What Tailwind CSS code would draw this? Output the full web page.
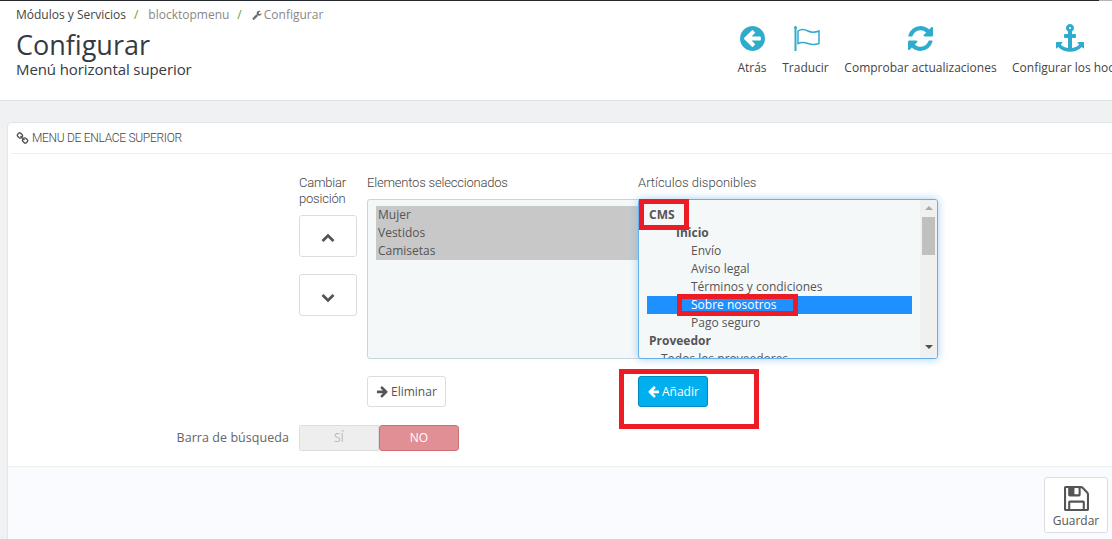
<!DOCTYPE html>
<html lang="es">
<head>
<meta charset="utf-8">
<title>Configurar</title>
<script src="https://cdn.jsdelivr.net/npm/@tailwindcss/browser@4"></script>
</head>
<body class="m-0">
<div class="relative w-[1112px] h-[539px] overflow-hidden bg-[#eff1f2] font-['Open_Sans',sans-serif] text-[#555]">

  <!-- top line -->
  <div class="flex h-px"><div class="w-[1099px] bg-[#25282d]"></div><div class="flex-1 bg-[#b5b5b5]"></div></div>

  <!-- header -->
  <header class="flex h-[100px] bg-white border-b border-[#dfe1e2]">
    <div class="w-[737px] shrink-0 pl-4">
      <nav class="flex items-center h-[14px] mt-[7px] text-[12px] leading-[14px] text-[#888] whitespace-nowrap">
        <span class="text-[#444]">Módulos y Servicios</span>
        <span class="ml-2 text-[#6a9c24]">/</span>
        <span class="ml-2.5">blocktopmenu</span>
        <span class="ml-2 text-[#6a9c24]">/</span>
        <svg class="ml-2.5 w-[10px] h-[10px] fill-[#666]" viewBox="0 0 1792 1792"><path d="M448 1472q0-26-19-45t-45-19-45 19-19 45 19 45 45 19 45-19 19-45zm644-420l-682 682q-37 37-90 37-52 0-91-37l-106-108q-38-36-38-90 0-53 38-91l681-681q39 98 114.500 173.500t173.500 114.500zm634-435q0 39-23 106-47 134-164.500 217.500t-258.500 83.500q-185 0-316.500-131.500t-131.500-316.500 131.500-316.500 316.500-131.500q58 0 121.500 16.500t107.500 46.500q16 11 16 28t-16 28l-293 169v224l193 107q5-3 79-48.500t135.500-81 70.500-35.500q15 0 23.500 10t8.500 25z"/></svg>
        <span class="ml-[2px]">Configurar</span>
      </nav>
      <h1 class="mt-[7px] text-[27px] leading-[32px] font-normal text-[#363a41]">Configurar</h1>
      <p class="text-[15px] leading-[16px] tracking-[-0.1px] text-[#363a41]">Menú horizontal superior</p>
    </div>
    <div class="flex gap-[15px] pt-[25px] text-[12px] leading-[14px] text-[#444] whitespace-nowrap">
      <div class="flex flex-col items-center w-[30px]">
        <svg class="w-[25px] h-[25px] fill-[#2eacce]" viewBox="128 128 1536 1536"><path d="M1408 960v-128q0-26-19-45t-45-19h-502l189-189q19-19 19-45t-19-45l-91-91q-18-18-45-18t-45 18l-362 362-91 91q-18 18-18 45t18 45l91 91 362 362q18 18 45 18t45-18l91-91q18-18 18-45t-18-45l-189-189h502q26 0 45-19t19-45zm256-64q0 209-103 385.500t-279.500 279.500-385.500 103-385.500-103-279.500-279.500-103-385.500 103-385.500 279.500-279.500 385.500-103 385.500 103 279.500 279.500 103 385.500z"/></svg>
        <span class="mt-[10px]">Atrás</span>
      </div>
      <div class="flex flex-col items-center w-[47px]">
        <svg class="w-[28px] h-[25px] fill-none stroke-[#2eacce]" viewBox="0 0 28 25"><path d="M3.500 1v24" stroke-width="2"/><circle cx="3.500" cy="1.500" r="1.500" fill="#2eacce" stroke="none"/><path d="M6 5c3-2 6-2 10 0s7 1.500 11 0v12.500c-4 1.500-7 1.500-11 0s-7-1.500-10 0z" stroke-width="1.500"/></svg>
        <span class="mt-[10px]">Traducir</span>
      </div>
      <div class="flex flex-col items-center w-[153px]">
        <svg class="w-[25px] h-[25px] fill-[#2eacce]" viewBox="128 128 1536 1536"><path d="M1639 1056q0 5-1 7-64 268-268 434.500t-478 166.500q-146 0-282.500-55t-243.500-157l-129 129q-19 19-45 19t-45-19-19-45v-448q0-26 19-45t45-19h448q26 0 45 19t19 45-19 45l-137 137q71 66 161 102t187 36q134 0 250-65t186-179q11-17 53-117 8-23 30-23h192q13 0 22.500 9.500t9.500 22.500zm25-800v448q0 26-19 45t-45 19h-448q-26 0-45-19t-19-45 19-45l138-138q-148-137-349-137-134 0-250 65t-186 179q-11 17-53 117-8 23-30 23h-199q-13 0-22.500-9.500t-9.500-22.500v-7q65-268 270-434.500t480-166.500q146 0 284 55.500t245 156.500l130-129q19-19 45-19t45 19 19 45z"/></svg>
        <span class="mt-[10px]">Comprobar actualizaciones</span>
      </div>
      <div class="flex flex-col items-start w-[110px]">
        <svg class="ml-[44px] w-[28px] h-[28px] -mt-[2px] -mb-[2px] fill-[#2eacce]" viewBox="0 0 1792 1792"><path d="M960 256q0-26-19-45t-45-19-45 19-19 45 19 45 45 19 45-19 19-45zm832 928v352q0 22-20 30-8 2-12 2-12 0-23-9l-93-93q-119 143-318.500 226.500t-429.500 83.500-429.500-83.500-318.500-226.500l-93 93q-9 9-23 9-4 0-12-2-20-8-20-30v-352q0-14 9-23t23-9h352q22 0 30 20 8 19-7 35l-100 100q67 91 189.500 153.500t271.500 82.500v-647h-192q-26 0-45-19t-19-45v-128q0-26 19-45t45-19h192v-163q-58-34-93-92.500t-35-128.500q0-106 75-181t181-75 181 75 75 181q0 70-35 128.500t-93 92.500v163h192q26 0 45 19t19 45v128q0 26-19 45t-45 19h-192v647q149-20 271.500-82.500t189.500-153.500l-100-100q-15-16-7-35 8-20 30-20h352q14 0 23 9t9 23z"/></svg>
        <span class="mt-[11px]">Configurar los hooks</span>
      </div>
    </div>
  </header>

  <!-- panel -->
  <section class="ml-[7px] mt-[21px] w-[1110px] h-[420px] flex flex-col bg-white border border-[#e3e5e6] rounded-tl-[5px]">
    <div class="flex items-center gap-[3px] h-[31px] mx-[3px] px-[5px] border-b border-[#eeeeee] font-['Roboto',sans-serif] font-light text-[12px] text-[#444] tracking-[-0.3px]">
      <svg class="w-[13px] h-[13px] fill-[#555]" viewBox="0 0 1792 1792"><path d="M1520 1216q0-40-28-68l-208-208q-28-28-68-28-42 0-72 32 3 3 19 18.500t21.500 21.500 15 19 13 25.500 3.500 27.500q0 40-28 68t-68 28q-15 0-27.500-3.500t-25.500-13-19-15-21.500-21.500-18.500-19q-33 31-33 73 0 40 28 68l206 207q27 27 68 27 40 0 68-26l147-146q28-28 28-67zm-703-705q0-40-28-68l-206-207q-28-28-68-28-39 0-68 27l-147 146q-28 28-28 67 0 40 28 68l208 208q27 27 68 27 42 0 72-31-3-3-19-18.500t-21.500-21.500-15-19-13-25.500-3.500-27.500q0-40 28-68t68-28q15 0 27.500 3.500t25.500 13 19 15 21.500 21.500 18.500 19q33-31 33-73zm895 705q0 120-85 203l-147 146q-83 83-203 83-121 0-204-85l-206-207q-83-83-83-203 0-123 88-209l-88-88q-86 88-208 88-120 0-204-84l-208-208q-84-84-84-204t85-203l147-146q83-83 203-83 121 0 204 85l206 207q83 83 83 203 0 123-88 209l88 88q86-88 208-88 120 0 204 84l208 208q84 84 84 204z"/></svg>
      <span>MENU DE ENLACE SUPERIOR</span>
    </div>

    <div class="h-[312px] shrink-0 pl-[291px] pt-[21px]">
      <div class="flex">
        <!-- col 1 -->
        <div class="w-[68px] shrink-0">
          <div class="font-['Roboto',sans-serif] font-light text-[13px] leading-[16px] tracking-[-0.2px] text-[#444] h-[40px]">Cambiar<br>posición</div>
          <button class="flex items-center justify-center pt-[2px] w-[58px] h-[42px] bg-white border border-[#dddddd] rounded-[3px]">
            <svg class="w-[14px] h-[14px] fill-[#555]" viewBox="0 0 1792 1792"><path d="M1683 1331l-166 165q-19 19-45 19t-45-19l-531-531-531 531q-19 19-45 19t-45-19l-166-165q-19-19-19-45.500t19-45.500l742-741q19-19 45-19t45 19l742 741q19 19 19 45.500t-19 45.500z"/></svg>
          </button>
          <button class="flex items-center justify-center pt-[3px] mt-[17px] w-[58px] h-[42px] bg-white border border-[#dddddd] rounded-[3px]">
            <svg class="w-[14px] h-[14px] fill-[#555]" viewBox="0 0 1792 1792"><path d="M1683 808l-742 741q-19 19-45 19t-45-19l-742-741q-19-19-19-45.500t19-45.500l166-165q19-19 45-19t45 19l531 531 531-531q19-19 45-19t45 19l166 165q19 19 19 45.500t-19 45.500z"/></svg>
          </button>
        </div>
        <!-- col 2 -->
        <div class="w-[271px] shrink-0">
          <div class="font-['Roboto',sans-serif] font-light text-[13px] leading-[16px] tracking-[-0.2px] text-[#444] h-[24px]">Elementos seleccionados</div>
          <div class="h-[160px] w-[280px] pt-[6px] pl-2 bg-[#f5f8f9] border border-[#c7d6db] rounded-[3px] text-[12px] leading-[18px] text-[#555]">
            <div class="bg-[#c8c8c8] px-[2px]">Mujer</div>
            <div class="bg-[#c8c8c8] px-[2px]">Vestidos</div>
            <div class="bg-[#c8c8c8] px-[2px]">Camisetas</div>
          </div>
          <button class="flex items-center gap-[2px] mt-[17px] h-[31px] w-[79px] pl-2 bg-white border border-[#dddddd] rounded-[3px] text-[12px] text-[#555]">
            <svg class="w-[13px] h-[13px] fill-[#555]" viewBox="0 0 1792 1792"><path d="M1600 960q0 54-37 91l-651 651q-39 37-91 37-51 0-90-37l-75-75q-38-38-38-91t38-91l293-293h-704q-52 0-84.500-37.500t-32.500-90.500v-128q0-53 32.500-90.500t84.500-37.500h704l-293-294q-38-36-38-90t38-90l75-75q38-38 90-38 53 0 91 38l651 651q37 35 37 90z"/></svg>
            Eliminar
          </button>
        </div>
        <!-- col 3 -->
        <div class="relative w-[300px] shrink-0">
          <div class="font-['Roboto',sans-serif] font-light text-[13px] leading-[16px] text-[#444] h-[24px]">Artículos disponibles</div>
          <div class="flex h-[160px] bg-[#f5f8f9] border border-[#66afe9] rounded-[3px] shadow-[0_0_8px_rgba(102,175,233,0.6)] overflow-hidden text-[12px] leading-[18px] text-[#555]">
            <div class="w-[281px] shrink-0 pt-[6px] pl-2 overflow-hidden whitespace-nowrap">
              <div class="pl-[2px] font-bold">CMS</div>
              <div class="pl-[29px] font-bold">Inicio</div>
              <div class="pl-[44px]">Envío</div>
              <div class="pl-[44px]">Aviso legal</div>
              <div class="pl-[44px]">Términos y condiciones</div>
              <div class="pl-[44px] w-[265px] bg-[#1e90ff] text-white">Sobre nosotros</div>
              <div class="pl-[44px]">Pago seguro</div>
              <div class="pl-[2px] font-bold">Proveedor</div>
              <div class="pl-[14px]">Todos los proveedores</div>
            </div>
            <div class="flex flex-col items-center w-[17px] pt-[6px] bg-[#f0f0f0]">
              <div class="w-0 h-0 border-x-[4px] border-x-transparent border-b-[4px] border-b-[#a8a8a8]"></div>
              <div class="w-[13px] h-[38px] shrink-0 mt-[7px] bg-[#c0c0c0]"></div>
              <div class="w-0 h-0 mt-[90px] border-x-[4px] border-x-transparent border-t-[4px] border-t-[#505050]"></div>
            </div>
          </div>
          <button class="flex items-center gap-[2px] mt-[17px] h-[31px] w-[70px] pl-2 bg-[#00aff0] border border-[#008abd] rounded-[3px] text-[12px] text-white">
            <svg class="w-[13px] h-[13px] fill-white" viewBox="0 0 1792 1792"><path d="M1664 896v128q0 53-32.500 90.500t-84.500 37.500h-704l293 294q38 36 38 90t-38 90l-75 75q-38 38-90 38-53 0-91-38l-651-652q-37-37-37-90 0-52 37-91l651-650q38-38 91-38 52 0 90 38l75 74q38 38 38 91t-38 91l-293 293h704q52 0 84.500 37.500t32.500 90.500z"/></svg>
            Añadir
          </button>
          <!-- annotations -->
          <div class="absolute left-[1px] top-[24px] w-[50px] h-[31px] border-[5px] border-[#ed1c24]"></div>
          <div class="absolute left-[39px] top-[119px] w-[121px] h-[22px] border-[5px] border-[#ed1c24]"></div>
          <div class="absolute -left-[19px] top-[194px] w-[140px] h-[60px] border-[5px] border-[#ed1c24]"></div>
        </div>
      </div>
      <!-- switch row -->
      <div class="flex items-center -ml-[291px] mt-[18px]">
        <label class="w-[281px] text-right text-[12.5px] tracking-[0.05px] text-[#666]">Barra de búsqueda</label>
        <div class="flex ml-[10px] h-[26px] w-[160px] text-[12px] rounded-[3px] overflow-hidden">
          <div class="flex-1 flex items-center justify-center bg-[#eeeeee] border border-[#dddddd] text-[#bbbbbb]">SÍ</div>
          <div class="flex-1 flex items-center justify-center bg-[#e08f95] border border-[#cc6f75] text-white rounded-[3px]">NO</div>
        </div>
      </div>
    </div>

    <!-- footer -->
    <div class="flex-1 flex justify-end items-start pt-[10px] pr-[8px] border-t border-[#eeeeee] bg-[#fafbfe]">
      <button class="flex flex-col items-center w-[64px] h-[56px] pt-[8px] bg-white border border-[#dddddd] rounded-[3px] text-[12px] leading-[14px] text-[#555]">
        <svg class="w-[25px] h-[25px] fill-[#555]" viewBox="128 128 1536 1536"><path d="M512 1536h768v-384h-768v384zm896 0h128v-896q0-14-10-38.500t-20-34.500l-281-281q-10-10-34-20t-39-10v416q0 40-28 68t-68 28h-576q-40 0-68-28t-28-68v-416h-128v1280h128v-416q0-40 28-68t68-28h832q40 0 68 28t28 68v416zm-384-928v-320q0-13-9.500-22.500t-22.500-9.500h-192q-13 0-22.500 9.500t-9.500 22.500v320q0 13 9.500 22.500t22.500 9.500h192q13 0 22.500-9.500t9.500-22.500zm640 32v928q0 40-28 68t-68 28h-1344q-40 0-68-28t-28-68v-1344q0-40 28-68t68-28h928q40 0 88 20t76 48l280 280q28 28 48 76t20 88z"/></svg>
        <span class="mt-[3px]">Guardar</span>
      </button>
    </div>
  </section>
</div>
</body>
</html>
